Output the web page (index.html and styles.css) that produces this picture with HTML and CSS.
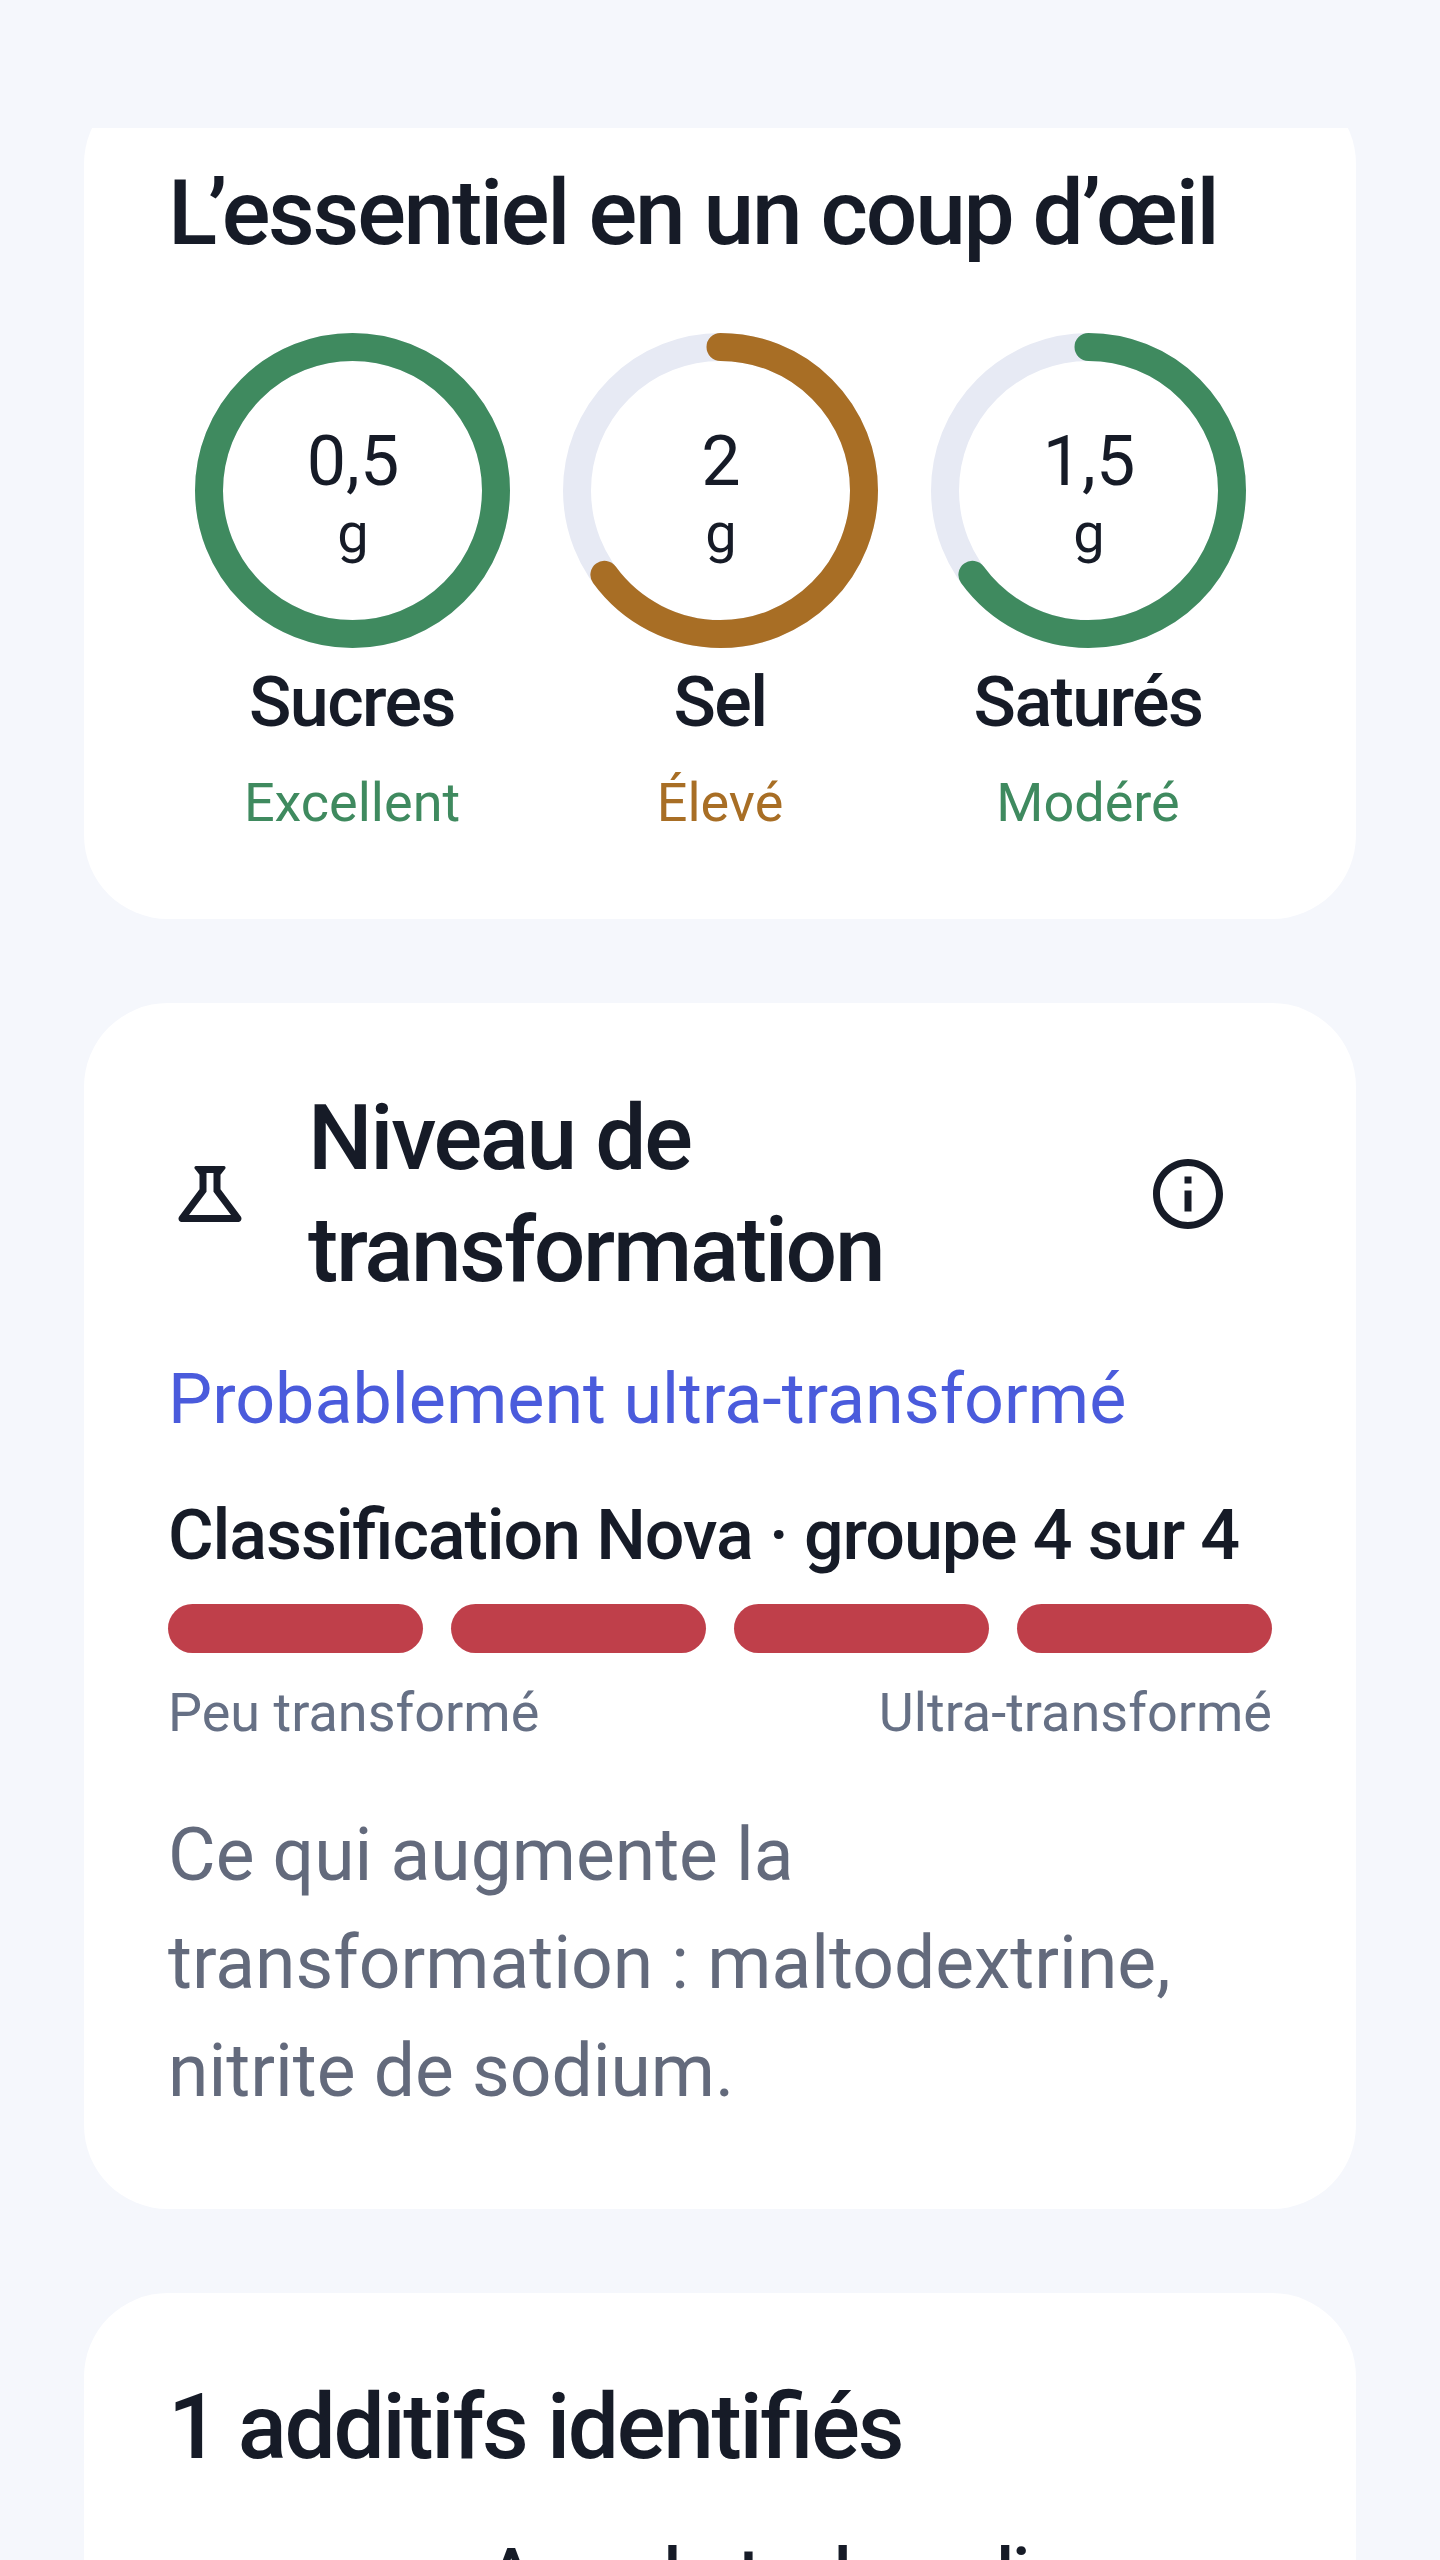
FILE: index.html
```html
<!DOCTYPE html>
<html lang="fr">
<head>
<meta charset="utf-8">
<title>Analyse produit</title>
<link rel="stylesheet" href="styles.css">
</head>
<body>
<main class="screen">
  <section class="card card-first">
    <h2 class="title"><span class="kern-l">L</span>’essentiel en un coup d’œil</h2>
    <div class="rings">
      <div class="metric">
        <div class="ring">
          <svg class="ring-svg" viewBox="0 0 315 315"><circle class="track" cx="157.5" cy="157.5" r="143.5"/><circle class="arc arc-full green" cx="157.5" cy="157.5" r="143.5" pathLength="100"/></svg>
          <div class="ring-text"><span class="value">0,5</span><span class="unit">g</span></div>
        </div>
        <div class="label">Sucres</div>
        <div class="status green-text">Excellent</div>
      </div>
      <div class="metric">
        <div class="ring">
          <svg class="ring-svg" viewBox="0 0 315 315"><circle class="track" cx="157.5" cy="157.5" r="143.5"/><circle class="arc arc-part amber" cx="157.5" cy="157.5" r="143.5" pathLength="100"/></svg>
          <div class="ring-text"><span class="value">2</span><span class="unit">g</span></div>
        </div>
        <div class="label">Sel</div>
        <div class="status amber-text">Élevé</div>
      </div>
      <div class="metric">
        <div class="ring">
          <svg class="ring-svg" viewBox="0 0 315 315"><circle class="track" cx="157.5" cy="157.5" r="143.5"/><circle class="arc arc-part green" cx="157.5" cy="157.5" r="143.5" pathLength="100"/></svg>
          <div class="ring-text"><span class="value">1,5</span><span class="unit">g</span></div>
        </div>
        <div class="label">Saturés</div>
        <div class="status green-text">Modéré</div>
      </div>
    </div>
  </section>

  <section class="card card-nova">
    <div class="head">
      <svg class="icon flask" viewBox="0 0 24 24"><path d="M13 11.33 18 18H6l5-6.67V6h2M15.96 4H8.04c-.42 0-.65.48-.39.81L9 6.5v4.17L3.2 18.4c-.49.66-.02 1.6.8 1.6h16c.82 0 1.29-.94.8-1.6L15 10.67V6.5l1.35-1.69c.26-.33.03-.81-.39-.81z"/></svg>
      <h2 class="title head-title">Niveau de transformation</h2>
      <button class="info" type="button" aria-label="Informations">
        <svg class="icon" viewBox="0 0 24 24"><path d="M11 7h2v2h-2zm0 4h2v6h-2zm1-9C6.48 2 2 6.48 2 12s4.48 10 10 10 10-4.48 10-10S17.52 2 12 2zm0 18c-4.41 0-8-3.59-8-8s3.59-8 8-8 8 3.59 8 8-3.59 8-8 8z"/></svg>
      </button>
    </div>
    <p class="verdict">Probablement ultra-transformé</p>
    <p class="nova">Classification Nova · groupe 4 sur 4</p>
    <div class="bars"><span class="bar"></span><span class="bar"></span><span class="bar"></span><span class="bar"></span></div>
    <div class="scale"><span>Peu transformé</span><span>Ultra-transformé</span></div>
    <p class="body">Ce qui augmente la transformation : maltodextrine, nitrite de sodium.</p>
  </section>

  <section class="card card-additives">
    <h2 class="title">1 additifs identifiés</h2>
    <div class="additive">Ascorbate de sodium</div>
  </section>
</main>
</body>
</html>
```

FILE: styles.css
```css
* { box-sizing: border-box; }
html, body { margin: 0; height: 100%; }
body {
  background: #f5f7fc;
  color: #161b27;
  font-family: Roboto, "Noto Sans", sans-serif;
  font-kerning: normal;
  font-feature-settings: "liga" 1, "kern" 1;
}
.screen {
  height: 2560px;
  padding: 80px 84px 0;
  display: flex;
  flex-direction: column;
  gap: 84px;
  overflow: hidden;
  clip-path: inset(128px 0 0 0);
}
.card {
  background: #fff;
  border-radius: 84px;
  padding: 77px 84px 81px;
  flex: none;
}
.card-nova { padding-top: 79px; padding-bottom: 84px; }
.card-additives { padding-top: 78px; }
.title {
  margin: 0;
  font-size: 91px;
  line-height: 112px;
  font-weight: 500;
  letter-spacing: -2.3px;
}
.kern-l { letter-spacing: -9.5px; }
.rings {
  display: grid;
  grid-template-columns: repeat(3, 1fr);
  margin-top: 64px;
}
.metric {
  display: flex;
  flex-direction: column;
  align-items: center;
}
.ring {
  position: relative;
  width: 315px;
  height: 315px;
}
.ring-svg { display: block; width: 100%; height: 100%; transform: rotate(-90deg); }
.track, .arc { fill: none; stroke-width: 28; }
.track { stroke: #e7eaf4; }
.arc { stroke-linecap: round; }
.arc-full { stroke-dasharray: 100 0; }
.arc-part { stroke-dasharray: 65 35; }
.green { stroke: #3f8a5f; }
.amber { stroke: #a86e25; }
.ring-text {
  position: absolute;
  inset: 0;
  padding: 5px 0 0 2px;
  display: flex;
  flex-direction: column;
  align-items: center;
  justify-content: center;
}
.value { font-size: 70px; line-height: 84px; }
.unit { font-size: 56px; line-height: 70px; margin-top: -5px; }
.label { margin-top: 12px; font-size: 70px; line-height: 84px; font-weight: 500; letter-spacing: -1.6px; }
.status { margin-top: 24px; font-size: 54px; line-height: 70px; }
.green-text { color: #3f8a5f; }
.amber-text { color: #a86e25; }
.head { display: flex; align-items: center; gap: 56px; }
.icon { display: block; width: 84px; height: 84px; fill: #161b27; flex: none; }
.head-title { flex: 1; }
.info {
  width: 168px;
  height: 168px;
  flex: none;
  border: 0;
  padding: 0;
  background: none;
  display: flex;
  align-items: center;
  justify-content: center;
}
.verdict { margin: 44px 0 0; font-size: 70px; line-height: 98px; color: #4a5bdc; }
.nova { margin: 45px 0 0; font-size: 70px; line-height: 84px; font-weight: 500; letter-spacing: -1.1px; }
.bars { display: grid; grid-template-columns: repeat(4, 1fr); gap: 28px; margin-top: 27px; }
.bar { height: 49px; border-radius: 24.5px; background: #bf3f4a; }
.scale { display: flex; justify-content: space-between; margin-top: 25px; font-size: 54px; line-height: 70px; color: #667085; }
.body { margin: 53px 0 0; font-size: 73.2px; line-height: 108px; color: #636a7c; }
.additive { margin-top: 42px; padding-left: 320px; font-size: 70px; line-height: 98px; font-weight: 500; letter-spacing: -1.5px; }
```
